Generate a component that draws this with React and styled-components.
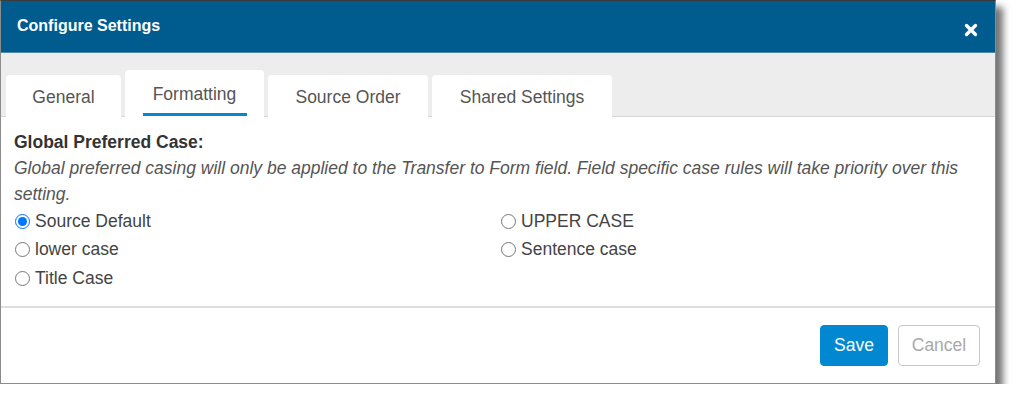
import React, { useState } from 'react';
import styled, { createGlobalStyle } from 'styled-components';

const GlobalStyle = createGlobalStyle`
  body {
    margin: 0;
    background: #ffffff;
    font-family: "Liberation Sans", Arial, sans-serif;
  }
`;

// Dialog shell
const Dialog = styled.div`
  width: 996px;
  height: 384px;
  box-sizing: border-box;
  border: 1px solid #8c8c8c;
  border-top-color: #3a3a3a;
  background: #ffffff;
  box-shadow: 7px 7px 7px rgba(0, 0, 0, 0.55);
  display: flex;
  flex-direction: column;
`;

const Header = styled.div`
  height: 52px;
  flex-shrink: 0;
  background: #005b8f;
  border-bottom: 1px solid #4f87ad;
  box-sizing: border-box;
  display: flex;
  align-items: center;
  justify-content: space-between;
  padding: 0 16px 0 16px;
`;

const Title = styled.h1`
  margin: 0;
  color: #ffffff;
  font-size: 16px;
  font-weight: bold;
  margin-top: -2px;
`;

const CloseButton = styled.button`
  border: none;
  background: none;
  padding: 0;
  width: 16px;
  height: 16px;
  display: flex;
  align-items: center;
  justify-content: center;
  margin-top: 6px;
  cursor: pointer;
`;

// Tabs
const TabBar = styled.div`
  height: 64px;
  flex-shrink: 0;
  background: #ededed;
  border-bottom: 1px solid #d6d6d6;
  box-sizing: border-box;
  display: flex;
  align-items: flex-end;
  gap: 4px;
  padding-left: 5px;
`;

const Tab = styled.button`
  position: relative;
  border: none;
  background: #ffffff;
  border-radius: 4px 4px 0 0;
  margin-bottom: -1px;
  height: ${(p) => (p.$active ? '47px' : '42px')};
  width: ${(p) => p.$width}px;
  padding: ${(p) => (p.$active ? '1px 0 0' : '3px 0 0')};
  font-family: inherit;
  font-size: 17.5px;
  color: #555555;
  cursor: pointer;

  &::after {
    content: '';
    display: ${(p) => (p.$active ? 'block' : 'none')};
    position: absolute;
    left: 18px;
    right: 17px;
    bottom: 1px;
    height: 3px;
    background: #0288d1;
  }
`;

// Content
const Body = styled.div`
  flex: 1;
  padding: 12px 13px 0;
  color: #333333;
`;

const Heading = styled.div`
  font-size: 17.5px;
  font-weight: bold;
  line-height: 26px;
  color: #333333;
`;

const Note = styled.p`
  margin: 0;
  font-size: 17.5px;
  font-style: italic;
  line-height: 26px;
  color: #555555;
`;

const Options = styled.div`
  display: grid;
  grid-template-columns: 486px 1fr;
  grid-auto-flow: column;
  grid-template-rows: repeat(3, 28.5px);
`;

const OptionLabel = styled.label`
  display: flex;
  align-items: center;
  gap: 5px;
  font-size: 17.5px;
  color: #444444;
  cursor: pointer;
`;

const Radio = styled.input`
  width: 15px;
  height: 15px;
  margin: 0 0 0 1px;
`;

// Footer
const Footer = styled.div`
  height: 77px;
  flex-shrink: 0;
  border-top: 2px solid #dedede;
  box-sizing: border-box;
  display: flex;
  align-items: center;
  justify-content: flex-end;
  gap: 10px;
  padding: 0 15px 0 0;
`;

const Button = styled.button`
  height: 41px;
  padding: 0;
  border-radius: 4px;
  font-family: inherit;
  font-size: 17.5px;
  cursor: pointer;
  border: 1px solid ${(p) => (p.$primary ? '#0288d1' : '#c8c8c8')};
  background: ${(p) => (p.$primary ? '#0288d1' : '#ffffff')};
  color: ${(p) => (p.$primary ? '#ffffff' : '#a9a9a9')};
  width: ${(p) => p.$width}px;
`;

const tabs = [
  { label: 'General', width: 115 },
  { label: 'Formatting', width: 139 },
  { label: 'Source Order', width: 160 },
  { label: 'Shared Settings', width: 180 },
];

const options = [
  'Source Default',
  'lower case',
  'Title Case',
  'UPPER CASE',
  'Sentence case',
];

const App = () => {
  const [activeTab, setActiveTab] = useState('Formatting');
  const [casing, setCasing] = useState('Source Default');

  return (
    <>
      <GlobalStyle />
      <Dialog>
        <Header>
          <Title>Configure Settings</Title>
          <CloseButton aria-label="Close">
            <svg width="14" height="14" viewBox="0 0 14 14">
              <path d="M2.5 2.5 L11.5 11.5 M11.5 2.5 L2.5 11.5" stroke="#ffffff" strokeWidth="3.4" strokeLinecap="round" />
            </svg>
          </CloseButton>
        </Header>
        <TabBar>
          {tabs.map((t) => (
            <Tab
              key={t.label}
              $width={t.width}
              $active={activeTab === t.label}
              onClick={() => setActiveTab(t.label)}
            >
              {t.label}
            </Tab>
          ))}
        </TabBar>
        <Body>
          <Heading>Global Preferred Case:</Heading>
          <Note>
            Global preferred casing will only be applied to the Transfer to Form field. Field specific case rules will take priority over this setting.
          </Note>
          <Options>
            {options.map((o) => (
              <OptionLabel key={o}>
                <Radio
                  type="radio"
                  name="casing"
                  checked={casing === o}
                  onChange={() => setCasing(o)}
                />
                {o}
              </OptionLabel>
            ))}
          </Options>
        </Body>
        <Footer>
          <Button $primary $width={68}>Save</Button>
          <Button $width={82}>Cancel</Button>
        </Footer>
      </Dialog>
    </>
  );
};

export default App;
